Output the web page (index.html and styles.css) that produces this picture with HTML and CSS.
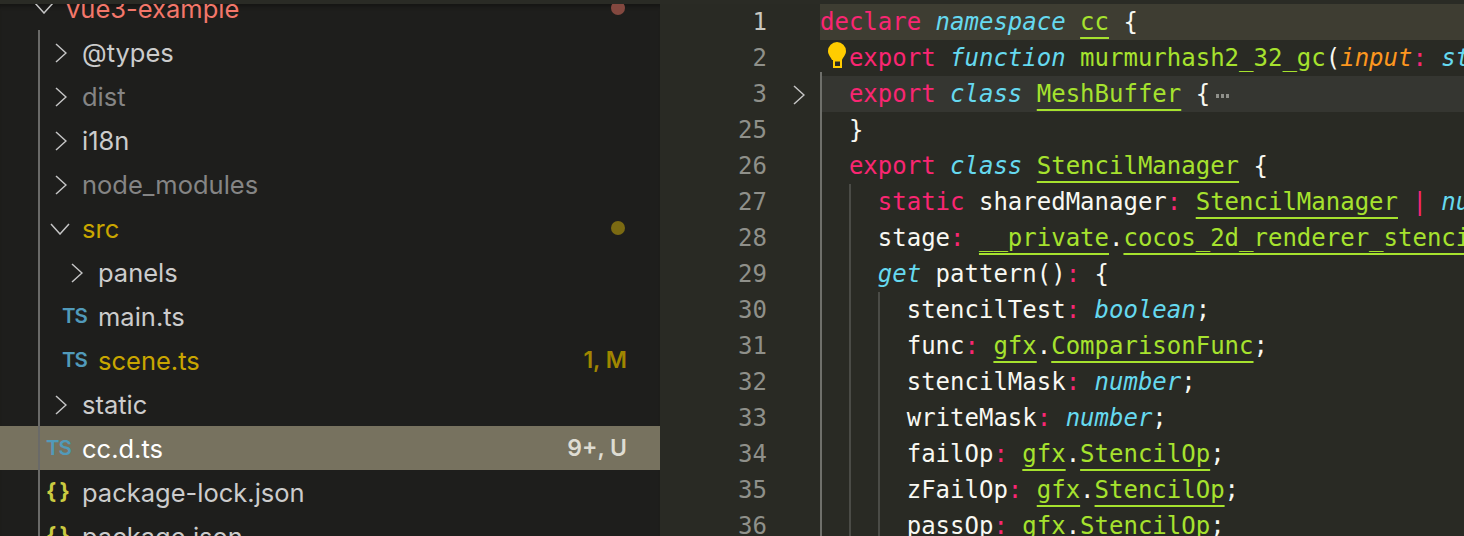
FILE: index.html
```html
<!DOCTYPE html>
<html lang="en">
<head>
<meta charset="utf-8">
<title>cc.d.ts</title>
<link rel="stylesheet" href="styles.css">
</head>
<body>
<div class="window">
  <div class="topbar"></div>
  <div class="main">
    <aside class="sidebar">
      <div class="tree">
        <div class="tree-guide"></div>
        <div class="row d0 c-error"><svg class="chev" viewBox="0 0 20 12"><path d="M1 1l9 10 9-10"/></svg><span class="name">vue3-example</span><span class="dot dot-error"></span></div>
        <div class="row d1"><svg class="chev" viewBox="0 0 12 20"><path d="M1 1l10 9-10 9"/></svg><span class="name">@types</span></div>
        <div class="row d1 c-dim"><svg class="chev" viewBox="0 0 12 20"><path d="M1 1l10 9-10 9"/></svg><span class="name">dist</span></div>
        <div class="row d1"><svg class="chev" viewBox="0 0 12 20"><path d="M1 1l10 9-10 9"/></svg><span class="name">i18n</span></div>
        <div class="row d1 c-dim"><svg class="chev" viewBox="0 0 12 20"><path d="M1 1l10 9-10 9"/></svg><span class="name">node_modules</span></div>
        <div class="row d1 open c-mod"><svg class="chev" viewBox="0 0 20 12"><path d="M1 1l9 10 9-10"/></svg><span class="name">src</span><span class="dot dot-mod"></span></div>
        <div class="row d2"><svg class="chev" viewBox="0 0 12 20"><path d="M1 1l10 9-10 9"/></svg><span class="name">panels</span></div>
        <div class="row d2 file"><span class="ts">TS</span><span class="name">main.ts</span></div>
        <div class="row d2 file c-mod"><span class="ts">TS</span><span class="name">scene.ts</span><span class="badge">1, M</span></div>
        <div class="row d1"><svg class="chev" viewBox="0 0 12 20"><path d="M1 1l10 9-10 9"/></svg><span class="name">static</span></div>
        <div class="row d1 file selected"><span class="ts">TS</span><span class="name">cc.d.ts</span><span class="badge">9+, U</span></div>
        <div class="row d1 file"><span class="json">{ }</span><span class="name">package-lock.json</span></div>
        <div class="row d1 file"><span class="json">{ }</span><span class="name">package.json</span></div>
      </div>
    </aside>
    <section class="editor">
      <div class="guide g1"></div>
      <div class="guide g2"></div>
      <div class="guide g3"></div>
      <div class="line current"><span class="num">1</span><span class="fold"></span><code class="code"><span class="k">declare</span> <span class="t">namespace</span> <span class="u">cc</span> {</code></div>
      <div class="line"><span class="num">2</span><span class="fold"></span><code class="code">  <span class="k">export</span> <span class="t">function</span> <span class="f">murmurhash2_32_gc</span>(<span class="p">input</span><span class="k">:</span> <span class="t">string</span>, <span class="p">seed</span><span class="k">:</span> <span class="t">number</span>)</code><svg class="bulb" viewBox="0 0 18 26"><path class="bulb-fill" d="M9 0a9 9 0 0 1 9 9c0 4-3 6-4 9H4C3 15 0 13 0 9a9 9 0 0 1 9-9z"/><path class="bulb-base" d="M6 18.500h7v6.500H6z"/></svg></div>
      <div class="line folded"><span class="num">3</span><span class="fold"><svg class="fold-chev" viewBox="0 0 12 20"><path d="M1 1l10 9-10 9"/></svg></span><code class="code">  <span class="k">export</span> <span class="t">class</span> <span class="u">MeshBuffer</span> {<svg class="more" viewBox="0 0 13 4"><path d="M0 0h3v4H0zM5 0h3v4H5zM10 0h3v4h-3z"/></svg></code></div>
      <div class="line"><span class="num">25</span><span class="fold"></span><code class="code">  }</code></div>
      <div class="line"><span class="num">26</span><span class="fold"></span><code class="code">  <span class="k">export</span> <span class="t">class</span> <span class="u">StencilManager</span> {</code></div>
      <div class="line"><span class="num">27</span><span class="fold"></span><code class="code">    <span class="k">static</span> sharedManager<span class="k">:</span> <span class="u">StencilManager</span> <span class="k">|</span> <span class="t">null</span>;</code></div>
      <div class="line"><span class="num">28</span><span class="fold"></span><code class="code">    stage<span class="k">:</span> <span class="u">__private</span>.<span class="u">cocos_2d_renderer_stencil_manager__Stage</span>;</code></div>
      <div class="line"><span class="num">29</span><span class="fold"></span><code class="code">    <span class="t">get</span> pattern()<span class="k">:</span> {</code></div>
      <div class="line"><span class="num">30</span><span class="fold"></span><code class="code">      stencilTest<span class="k">:</span> <span class="t">boolean</span>;</code></div>
      <div class="line"><span class="num">31</span><span class="fold"></span><code class="code">      func<span class="k">:</span> <span class="u">gfx</span>.<span class="u">ComparisonFunc</span>;</code></div>
      <div class="line"><span class="num">32</span><span class="fold"></span><code class="code">      stencilMask<span class="k">:</span> <span class="t">number</span>;</code></div>
      <div class="line"><span class="num">33</span><span class="fold"></span><code class="code">      writeMask<span class="k">:</span> <span class="t">number</span>;</code></div>
      <div class="line"><span class="num">34</span><span class="fold"></span><code class="code">      failOp<span class="k">:</span> <span class="u">gfx</span>.<span class="u">StencilOp</span>;</code></div>
      <div class="line"><span class="num">35</span><span class="fold"></span><code class="code">      zFailOp<span class="k">:</span> <span class="u">gfx</span>.<span class="u">StencilOp</span>;</code></div>
      <div class="line"><span class="num">36</span><span class="fold"></span><code class="code">      passOp<span class="k">:</span> <span class="u">gfx</span>.<span class="u">StencilOp</span>;</code></div>
    </section>
  </div>
</div>
</body>
</html>
```
FILE: styles.css
```css
* { box-sizing: border-box; }
html, body { margin: 0; padding: 0; height: 100%; overflow: hidden; background: #272822; }
.window { width: 1464px; height: 536px; display: flex; flex-direction: column; overflow: hidden; position: relative; }
.topbar { flex: none; height: 4px; background: #2a2b25; position: relative; z-index: 3; }
.main { flex: 1; display: flex; min-height: 0; }

/* Explorer */
.sidebar { flex: none; width: 660px; background: #1e1e1c; overflow: hidden; position: relative; box-shadow: inset 0 5px 4px -3px #141412; font-family: Inter, "Liberation Sans", sans-serif; font-size: 25.500px; }
.tree { margin-top: -18px; position: relative; }
.tree-guide { position: absolute; left: 38px; top: 44px; bottom: -100px; width: 2px; background: #6a6a68; z-index: 2; }
.row { height: 44px; display: flex; align-items: center; position: relative; color: #cccccc; white-space: nowrap; padding-right: 33px; }
.row.d0 { padding-left: 66px; }
.row.d1 { padding-left: 82px; }
.row.d2 { padding-left: 98px; }
.name { flex: none; }
.chev { position: absolute; top: 13px; left: 55px; width: 12px; height: 20px; fill: none; stroke: #c5c5c5; stroke-width: 1.500; }
.row.d0 .chev { left: 34px; top: 16px; width: 20px; height: 12px; }
.row.open .chev { left: 50px; top: 17px; width: 20px; height: 12px; }
.row.d2 .chev { left: 71px; }
.c-error { color: #f3776a; }
.c-dim { color: #858585; }
.c-mod { color: #c9a600; }
.selected { background: #77725f; color: #ffffff; }
.ts { position: absolute; left: 46px; top: 9px; font-size: 20.500px; font-weight: 600; color: #519aba; letter-spacing: -1px; line-height: 26px; }
.row.d2 .ts { left: 62px; }
.json { position: absolute; left: 46px; top: 8px; font-size: 22px; font-weight: 700; color: #cbcb41; line-height: 26px; word-spacing: -2px; }
.dot { position: absolute; right: 35px; top: 15px; width: 14px; height: 14px; border-radius: 50%; }
.dot-error { background: #83483f; }
.dot-mod { background: #7b6a12; }
.badge { margin-left: auto; font-size: 23px; font-weight: 600; }
.c-mod .badge { color: #a08600; }
.selected .badge { color: #dedcd2; }

/* Editor */
.editor { flex: 1; min-width: 0; background: #292a24; overflow: hidden; position: relative; font-family: "DejaVu Sans Mono", monospace; font-size: 24px; }
.line { height: 36px; line-height: 36px; display: flex; white-space: pre; color: #f8f8f2; position: relative; }
.num { flex: none; width: 107px; text-align: right; color: #8f908a; }
.current .num { color: #c8c8c2; }
.fold { flex: none; width: 53px; position: relative; }
.fold-chev { position: absolute; left: 26px; top: 9px; width: 12px; height: 20px; fill: none; stroke: #c5c5c5; stroke-width: 1.500; }
.code { font: inherit; flex: 1; min-width: 0; overflow: hidden; white-space: pre; }
.current .code { background: #3e3d32; }
.folded .code { background: #353631; }
.k { color: #f92672; }
.t { color: #66d9ef; font-style: italic; }
.f { color: #a6e22e; }
.p { color: #fd971f; font-style: italic; }
.u { color: #a6e22e; text-decoration: underline; text-decoration-thickness: 2px; text-underline-offset: 7px; text-decoration-skip-ink: none; }
.bulb { position: absolute; left: 168px; top: 2px; width: 18px; height: 26px; }
.bulb-fill { fill: #ffcc00; }
.bulb-base { fill: #292a24; stroke: #ffcc00; stroke-width: 2; }
.more { width: 13px; height: 4px; margin-left: 6px; vertical-align: 4px; fill: #8f908a; }
.guide { position: absolute; width: 2px; bottom: 0; z-index: 2; }
.g1 { left: 160px; top: 68px; background: #6f706b; }
.g2 { left: 189px; top: 180px; background: #4a4b46; }
.g3 { left: 218px; top: 288px; background: #4a4b46; }
```
